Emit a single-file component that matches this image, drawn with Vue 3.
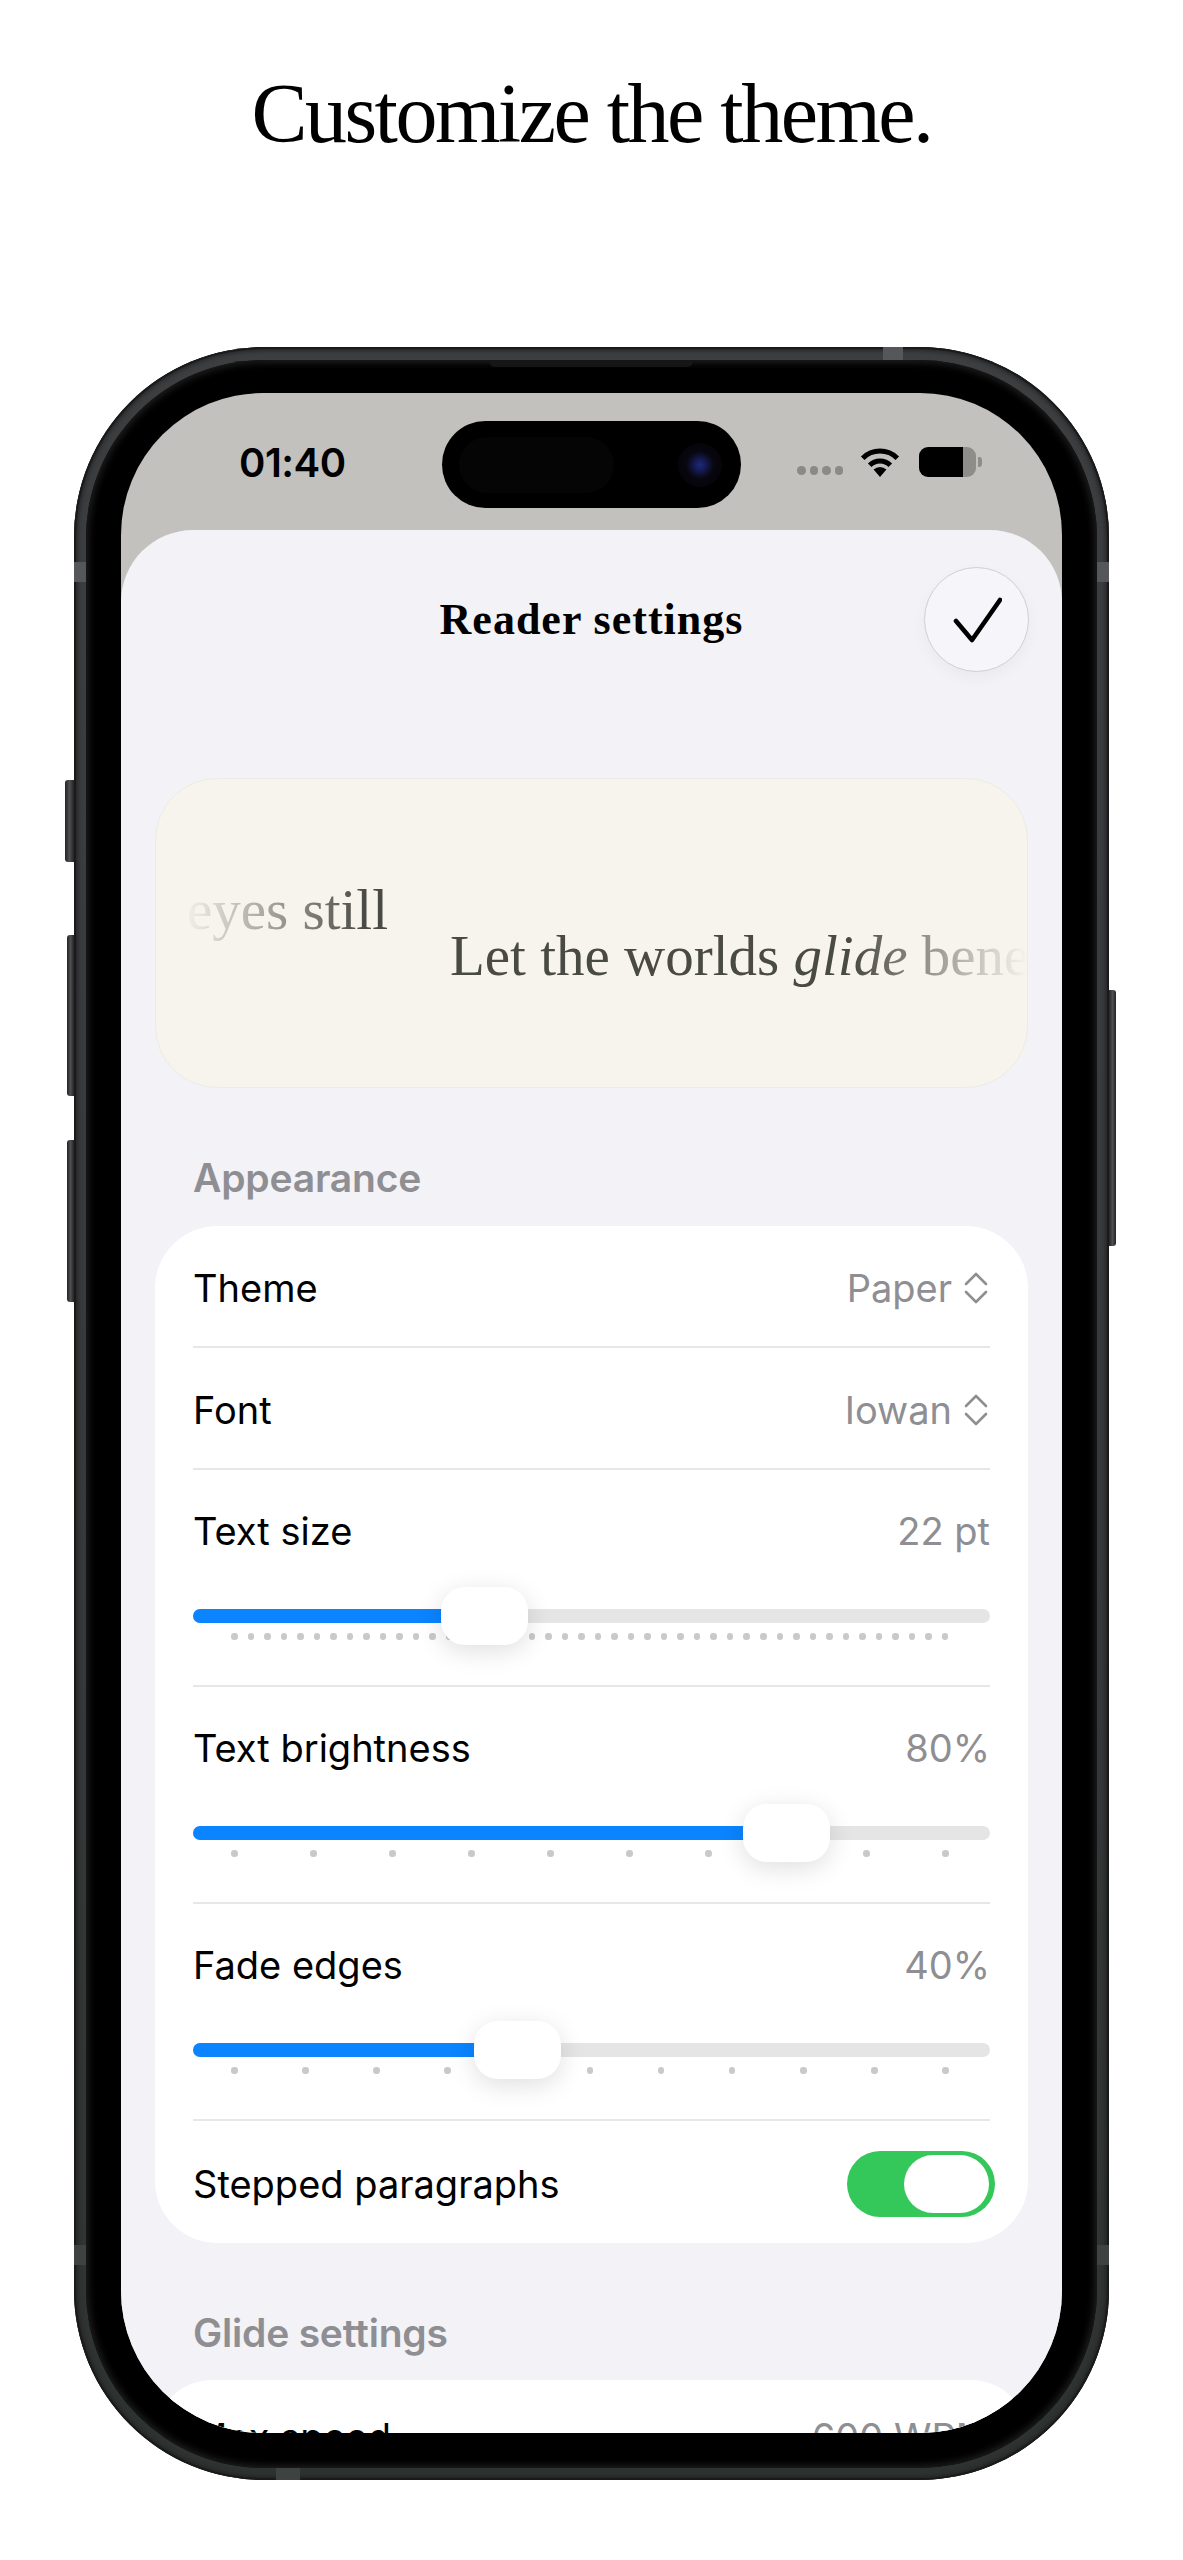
<script setup>
const sliders = [
  { label: 'Text size', value: '22 pt', knob: 248, dots: 44 },
  { label: 'Text brightness', value: '80%', knob: 550, dots: 10 },
  { label: 'Fade edges', value: '40%', knob: 281, dots: 11 },
]
</script>

<template>
  <div class="page">
    <h1 class="headline">Customize the theme.</h1>
    <div class="phone">
      <span class="side-btn action"></span>
      <span class="side-btn vol-up"></span>
      <span class="side-btn vol-down"></span>
      <span class="side-btn power"></span>
      <span class="antenna an-top"></span>
      <span class="antenna an-bottom"></span>
      <span class="antenna an-l1"></span>
      <span class="antenna an-r1"></span>
      <span class="antenna an-l2"></span>
      <span class="antenna an-r2"></span>
      <div class="bezel">
        <span class="speaker"></span>
        <div class="screen">
          <div class="status">
            <span class="time">01:40</span>
            <div class="island">
              <span class="sensor"></span>
              <span class="camera"></span>
            </div>
            <div class="status-right">
              <div class="signal"><i></i><i></i><i></i><i></i></div>
              <svg class="wifi" width="40" height="29" viewBox="0 0 40 29" fill="none">
                <path d="M2.7 10.2A24.5 24.5 0 0 1 37.3 10.2" stroke="#000" stroke-width="5" />
                <path d="M9.7 17.2A14.5 14.5 0 0 1 30.3 17.2" stroke="#000" stroke-width="5" />
                <path d="M20 29L13.6 21.6A9 9 0 0 1 26.4 21.6Z" fill="#000" />
              </svg>
              <span class="battery"></span>
            </div>
          </div>

          <div class="sheet">
            <header class="sheet-head">
              <span></span>
              <h2 class="title">Reader settings</h2>
              <div class="done">
                <svg width="50" height="46" viewBox="0 0 50 46" fill="none">
                  <path d="M4 24L20 43L48 3" stroke="#000" stroke-width="4.6" stroke-linecap="round" stroke-linejoin="round" />
                </svg>
              </div>
            </header>

            <div class="preview">
              <div class="preview-text">
                <div class="line-one"><span>Keep your eyes still</span></div>
                <div class="line-two">Let the worlds <em>glide</em> beneath</div>
              </div>
            </div>

            <div class="group-label">Appearance</div>
            <div class="card">
              <div class="row">
                <span>Theme</span>
                <span class="picker">
                  Paper
                  <svg width="24" height="32" viewBox="0 0 24 32" fill="none">
                    <path d="M2 12L12 2L22 12M2 20L12 30L22 20" stroke="#8e8e93" stroke-width="2.6" stroke-linecap="round" stroke-linejoin="round" />
                  </svg>
                </span>
              </div>
              <div class="row">
                <span>Font</span>
                <span class="picker">
                  Iowan
                  <svg width="24" height="32" viewBox="0 0 24 32" fill="none">
                    <path d="M2 12L12 2L22 12M2 20L12 30L22 20" stroke="#8e8e93" stroke-width="2.6" stroke-linecap="round" stroke-linejoin="round" />
                  </svg>
                </span>
              </div>
              <div v-for="s in sliders" :key="s.label" class="slider-row">
                <div class="slider-head">
                  <span>{{ s.label }}</span>
                  <span class="muted">{{ s.value }}</span>
                </div>
                <div class="slider">
                  <div class="track">
                    <div class="fill" :style="{ width: s.knob + 40 + 'px' }"></div>
                  </div>
                  <div class="dots">
                    <i v-for="n in s.dots" :key="n"></i>
                  </div>
                  <div class="knob" :style="{ left: s.knob + 'px' }"></div>
                </div>
              </div>
              <div class="row last">
                <span>Stepped paragraphs</span>
                <div class="toggle"><span></span></div>
              </div>
            </div>

            <div class="group-label second">Glide settings</div>
            <div class="card">
              <div class="row clipped">
                <span>Max speed</span>
                <span class="muted">600 WPM</span>
              </div>
            </div>
          </div>
        </div>
      </div>
    </div>
  </div>
</template>

<style>
html, body {
  margin: 0;
  background: #fff;
}
</style>

<style scoped>
.page {
  width: 1183px;
  height: 2560px;
  overflow: hidden;
  background: #fff;
  font-family: Inter, "Liberation Sans", sans-serif;
}

.headline {
  margin: 0;
  height: 347px;
  padding-top: 64px;
  box-sizing: border-box;
  text-align: center;
  font-family: "Liberation Serif", serif;
  font-weight: 400;
  font-size: 84px;
  line-height: 100px;
  letter-spacing: -2.5px;
  color: #000;
}

.phone {
  position: relative;
  box-sizing: border-box;
  width: 1035px;
  height: 2133px;
  margin-left: 74px;
  padding: 13px 12px 12px;
  border-radius: 190px;
  background: linear-gradient(180deg, #3d3e40 0%, #38393b 50%, #2e3331 100%);
  box-shadow: inset 0 0 0 2px #1a1a1b, inset 0 0 5px 3px #1f1f20;
}

.side-btn {
  position: absolute;
  border-radius: 3px 0 0 3px;
  background: linear-gradient(90deg, #232324, #4f4f51 50%, #232324);
}
.action { left: -9px; top: 433px; width: 9px; height: 82px; }
.vol-up { left: -7px; top: 588px; width: 7px; height: 161px; }
.vol-down { left: -7px; top: 793px; width: 7px; height: 162px; }
.power {
  right: -7px;
  top: 643px;
  width: 7px;
  height: 256px;
  border-radius: 0 3px 3px 0;
}

.antenna {
  position: absolute;
  background: #56575a;
}
.an-top { left: 809px; top: 0; width: 20px; height: 13px; }
.an-bottom { left: 202px; bottom: 0; width: 24px; height: 12px; background: #3e4341; }
.an-l1 { left: 0; top: 215px; width: 12px; height: 20px; }
.an-r1 { right: 0; top: 215px; width: 12px; height: 20px; }
.an-l2 { left: 0; top: 1898px; width: 12px; height: 20px; background: #3e4341; }
.an-r2 { right: 0; top: 1898px; width: 12px; height: 20px; background: #3e4341; }

.bezel {
  position: relative;
  box-sizing: border-box;
  height: 100%;
  padding: 33px 35px 35px;
  border-radius: 178px;
  background: #000;
  box-shadow: inset 0 0 7px 3px #1d1d1e;
}

.speaker {
  position: absolute;
  left: 403px;
  top: 0;
  width: 204px;
  height: 7px;
  border-radius: 0 0 6px 6px;
  background: #161617;
}

.screen {
  display: flex;
  flex-direction: column;
  height: 100%;
  overflow: hidden;
  border-radius: 142px;
  background: #c2c1bd;
}

.status {
  display: flex;
  flex: none;
  align-items: center;
  box-sizing: border-box;
  height: 137px;
  padding: 28px 0 22px 118px;
}

.time {
  width: 105px;
  font-size: 40px;
  font-weight: 600;
  letter-spacing: -0.5px;
  color: #000;
  margin-top: -5px;
  white-space: nowrap;
}

.island {
  display: flex;
  align-items: center;
  box-sizing: border-box;
  width: 299px;
  height: 87px;
  margin-left: 98px;
  padding: 0 19px 0 17px;
  border-radius: 44px;
  background: #000;
}

.sensor {
  width: 155px;
  height: 56px;
  border-radius: 28px;
  background: #050505;
}

.camera {
  width: 44px;
  height: 44px;
  margin-left: auto;
  border-radius: 50%;
  background: radial-gradient(circle, #1f2a78 0, #141a50 20%, #08060e 45%, #050308 100%);
}

.status-right {
  display: flex;
  align-items: center;
  margin-left: 56px;
  margin-top: -5px;
}

.signal {
  display: flex;
  gap: 4px;
  margin-top: 17px;
  width: 46px;
}

.signal i {
  width: 8.5px;
  height: 8.5px;
  border-radius: 50%;
  background: #8b8a87;
}

.wifi {
  margin-left: 17px;
  overflow: visible;
}

.battery {
  position: relative;
  width: 57px;
  height: 30px;
  margin-left: 19px;
  border-radius: 9px;
  background: linear-gradient(90deg, #000 44px, #8e8d89 44px);
}

.battery::after {
  content: "";
  position: absolute;
  right: -6px;
  top: 10px;
  width: 4px;
  height: 10px;
  border-radius: 0 3px 3px 0;
  background: #8e8d89;
}

.sheet {
  flex: 1;
  min-height: 0;
  box-sizing: border-box;
  padding: 37px 34px 0;
  overflow: hidden;
  border-radius: 72px 72px 0 0;
  background: #f2f2f7;
}

.sheet-head {
  display: grid;
  grid-template-columns: 104px 1fr 104px;
  align-items: center;
}

.title {
  margin: 0;
  text-align: center;
  font-family: "Liberation Serif", serif;
  font-weight: 700;
  font-size: 44px;
  line-height: 50px;
  letter-spacing: 1px;
  color: #000;
}

.done {
  display: flex;
  align-items: center;
  justify-content: center;
  box-sizing: border-box;
  width: 105px;
  height: 105px;
  border: 1.5px solid #cfcfd3;
  border-radius: 50%;
  background: #f6f5f9;
  box-shadow: 0 6px 16px rgba(0, 0, 0, 0.04);
}

.preview {
  box-sizing: border-box;
  height: 310px;
  margin-top: 106px;
  padding-top: 78px;
  overflow: hidden;
  border-radius: 62px;
  border: 1px solid #ecebe6;
  background: #f7f4ed;
}

.preview-text {
  padding: 30px 0;
  font-family: "Liberation Serif", serif;
  font-size: 57px;
  line-height: 46px;
  color: #4a4a45;
  white-space: nowrap;
  -webkit-mask-image: linear-gradient(90deg, transparent 3%, #000 24%, #000 80%, transparent 100%);
  mask-image: linear-gradient(90deg, transparent 3%, #000 24%, #000 80%, transparent 100%);
}

.line-one {
  display: flex;
  justify-content: flex-end;
  width: 232px;
}

.line-two {
  margin-left: 294px;
}

.group-label {
  height: 46px;
  margin: 67px 0 25px;
  padding-left: 38px;
  font-size: 39px;
  line-height: 46px;
  font-weight: 600;
  letter-spacing: -0.2px;
  color: #8e8e93;
}

.group-label.second {
  margin: 67px 0 24px;
}

.card {
  padding: 0 38px;
  border-radius: 62px;
  background: #fff;
  font-size: 38px;
  color: #000;
}

.row {
  display: flex;
  align-items: center;
  justify-content: space-between;
  box-sizing: border-box;
  height: 122px;
  padding-top: 4px;
  border-bottom: 2px solid #e7e7e9;
}

.row.last {
  height: 122px;
  padding-top: 3px;
  border-bottom: none;
}

.row.clipped {
  height: 114px;
  padding-top: 0;
  border-bottom: none;
}

.picker {
  display: flex;
  align-items: center;
  gap: 12px;
  color: #8e8e93;
  margin-right: 2px;
}

.muted {
  color: #8e8e93;
}

.slider-row {
  box-sizing: border-box;
  height: 217px;
  padding-top: 38px;
  border-bottom: 2px solid #e7e7e9;
}

.slider-head {
  display: flex;
  justify-content: space-between;
  height: 46px;
  line-height: 46px;
}

.slider {
  position: relative;
  height: 58px;
  margin-top: 33px;
  padding-top: 22px;
  box-sizing: border-box;
}

.track {
  height: 14px;
  overflow: hidden;
  border-radius: 7px;
  background: #e5e5e5;
}

.fill {
  height: 100%;
  background: #0a84ff;
}

.dots {
  display: flex;
  justify-content: space-between;
  margin-top: 10px;
  padding: 0 41px 0 38px;
}

.dots i {
  width: 6.5px;
  height: 6.5px;
  border-radius: 50%;
  background: #c9c9cb;
}

.knob {
  position: absolute;
  top: 0;
  width: 87px;
  height: 58px;
  border-radius: 24px;
  background: #fff;
  box-shadow: 0 6px 26px rgba(0, 0, 0, 0.13);
}

.toggle {
  display: flex;
  justify-content: flex-end;
  box-sizing: border-box;
  width: 148px;
  height: 66px;
  margin-right: -5px;
  padding: 4px 6px;
  border-radius: 33px;
  background: #34c759;
}

.toggle span {
  width: 85px;
  height: 58px;
  border-radius: 29px;
  background: #fff;
}
</style>
